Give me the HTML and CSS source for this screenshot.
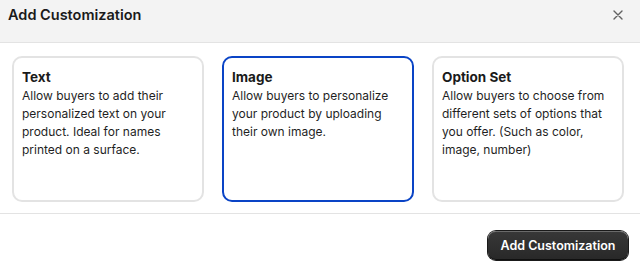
FILE: index.html
```html
<!DOCTYPE html>
<html lang="en">
<head>
<meta charset="utf-8">
<title>Add Customization</title>
<link rel="stylesheet" href="styles.css">
</head>
<body>
<div class="modal">
  <header class="modal-header">
    <h1 class="modal-title">Add Customization</h1>
    <button class="close" aria-label="Close">
      <svg width="10" height="10" viewBox="0 0 10 10"><path d="M1 1L9 9M9 1L1 9" stroke="#616161" stroke-width="1.4" stroke-linecap="round"/></svg>
    </button>
  </header>
  <section class="options">
    <div class="card">
      <h2 class="card-title">Text</h2>
      <p class="card-text">Allow buyers to add their personalized text on your product. Ideal for names printed on a surface.</p>
    </div>
    <div class="card selected">
      <h2 class="card-title">Image</h2>
      <p class="card-text">Allow buyers to personalize your product by uploading their own image.</p>
    </div>
    <div class="card">
      <h2 class="card-title">Option Set</h2>
      <p class="card-text">Allow buyers to choose from different sets of options that you offer. (Such as color, image, number)</p>
    </div>
  </section>
  <footer class="modal-footer">
    <button class="primary">Add Customization</button>
  </footer>
</div>
</body>
</html>
```
FILE: styles.css
```css
* { box-sizing: border-box; }
html, body { margin: 0; padding: 0; background: #ffffff; }
body {
  font-family: Inter, "Noto Sans", sans-serif;
  color: #303030;
  width: 640px;
  height: 270px;
  overflow: hidden;
}
.modal-header {
  height: 43px;
  background: #f3f3f3;
  border-bottom: 1px solid #e3e3e3;
  display: flex;
  align-items: flex-start;
  justify-content: space-between;
  padding: 5px 17px 0 8px;
}
.modal-title {
  margin: 0;
  font-size: 14.5px;
  line-height: 20px;
  font-weight: 600;
  color: #1a1a1a;
}
.close {
  border: 0;
  background: none;
  padding: 0;
  margin-top: 5px;
  width: 10px;
  height: 10px;
  display: flex;
}
.options {
  display: grid;
  grid-template-columns: repeat(3, 192px);
  column-gap: 18px;
  padding: 13px 16px 11px 12px;
  border-bottom: 1px solid #e3e3e3;
}
.card {
  height: 146px;
  border: 2px solid #e3e3e3;
  border-radius: 10px;
  padding: 9px 8px;
}
.card.selected { border-color: #0a44c6; }
.card-title {
  margin: 0;
  font-size: 13.5px;
  line-height: 20px;
  font-weight: 650;
  color: #1a1a1a;
}
.card-text {
  margin: 0;
  font-size: 12px;
  line-height: 18px;
  color: #1f1f1f;
}
.modal-footer {
  display: flex;
  justify-content: flex-end;
  padding: 17px 12px 0 0;
}
.primary {
  height: 29px;
  width: 140px;
  border: 0;
  border-radius: 8px;
  background: linear-gradient(#383838, #282828);
  box-shadow: inset 0 1px 0 rgba(255,255,255,0.25), inset 0 -1px 0 rgba(0,0,0,0.6), 0 0 0 1px #1a1a1a;
  color: #ffffff;
  font-family: Inter, "Noto Sans", sans-serif;
  font-size: 12.5px;
  font-weight: 600;
  padding: 0;
}
```
